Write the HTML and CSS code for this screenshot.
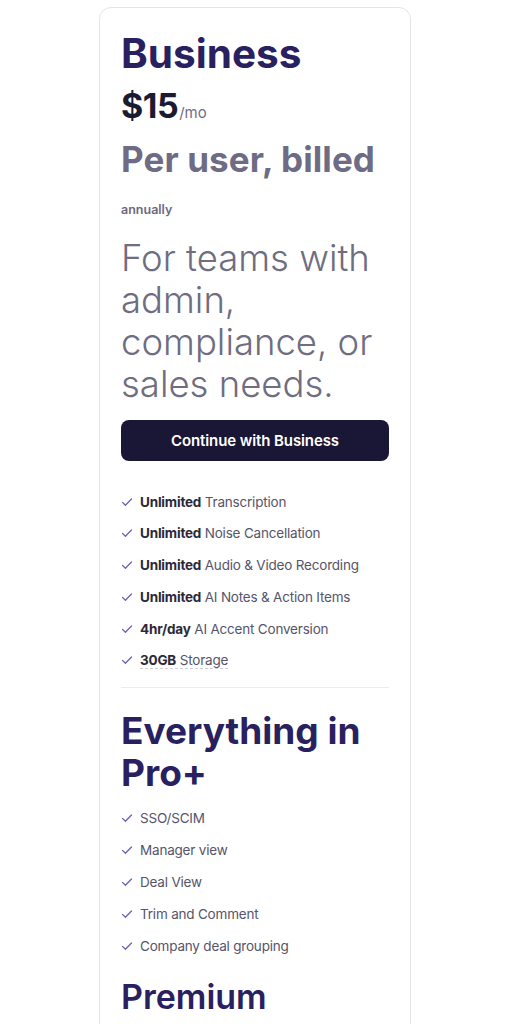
FILE: index.html
```html
<!DOCTYPE html>
<html lang="en">
<head>
<meta charset="utf-8">
<title>Business plan</title>
<link rel="stylesheet" href="styles.css">
</head>
<body>
<div class="page">
  <section class="card">
    <h2 class="plan">Business</h2>
    <div class="price"><span class="amount">$15</span><span class="per">/mo</span></div>
    <div class="billing">Per user, billed</div>
    <div class="billing-sub">annually</div>
    <p class="desc">For teams with admin, compliance, or sales needs.</p>
    <button class="cta">Continue with Business</button>
    <ul class="features">
      <li><svg class="check" viewBox="0 0 12 12"><path d="M1.5 6.4 L4.4 9.2 L10.5 3"/></svg><span><b>Unlimited</b> Transcription</span></li>
      <li><svg class="check" viewBox="0 0 12 12"><path d="M1.5 6.4 L4.4 9.2 L10.5 3"/></svg><span><b>Unlimited</b> Noise Cancellation</span></li>
      <li><svg class="check" viewBox="0 0 12 12"><path d="M1.5 6.4 L4.4 9.2 L10.5 3"/></svg><span><b>Unlimited</b> Audio &amp; Video Recording</span></li>
      <li><svg class="check" viewBox="0 0 12 12"><path d="M1.5 6.4 L4.4 9.2 L10.5 3"/></svg><span><b>Unlimited</b> AI Notes &amp; Action Items</span></li>
      <li><svg class="check" viewBox="0 0 12 12"><path d="M1.5 6.4 L4.4 9.2 L10.5 3"/></svg><span><b>4hr/day</b> AI Accent Conversion</span></li>
      <li><svg class="check" viewBox="0 0 12 12"><path d="M1.5 6.4 L4.4 9.2 L10.5 3"/></svg><span class="tip"><b>30GB</b> Storage</span></li>
    </ul>
    <hr class="divider">
    <h3 class="section">Everything in Pro+</h3>
    <ul class="features features-pro">
      <li><svg class="check" viewBox="0 0 12 12"><path d="M1.5 6.4 L4.4 9.2 L10.5 3"/></svg><span>SSO/SCIM</span></li>
      <li><svg class="check" viewBox="0 0 12 12"><path d="M1.5 6.4 L4.4 9.2 L10.5 3"/></svg><span>Manager view</span></li>
      <li><svg class="check" viewBox="0 0 12 12"><path d="M1.5 6.4 L4.4 9.2 L10.5 3"/></svg><span>Deal View</span></li>
      <li><svg class="check" viewBox="0 0 12 12"><path d="M1.5 6.4 L4.4 9.2 L10.5 3"/></svg><span>Trim and Comment</span></li>
      <li><svg class="check" viewBox="0 0 12 12"><path d="M1.5 6.4 L4.4 9.2 L10.5 3"/></svg><span>Company deal grouping</span></li>
    </ul>
    <h3 class="section premium">Premium</h3>
  </section>
</div>
</body>
</html>
```
FILE: styles.css
```css
* { box-sizing: border-box; }
html, body { margin: 0; padding: 0; background: #ffffff; }
body { font-family: "Inter", "Liberation Sans", sans-serif; }
.page { padding: 7px 0 0 99px; height: 1024px; overflow: hidden; }
.card {
  width: 312px;
  border: 1px solid #e4e4e8;
  border-radius: 12px;
  padding: 22px 21px 40px 21px;
  display: flex;
  flex-direction: column;
}
.plan {
  margin: 0;
  font-size: 40.5px;
  line-height: 48px;
  font-weight: 700;
  color: #29215f;
  letter-spacing: 0;
}
.price { margin-top: 6px; display: flex; align-items: baseline; height: 44px; }
.amount { font-size: 34px; line-height: 44px; font-weight: 700; color: #1c1a30; letter-spacing: -0.5px; }
.per { font-size: 15px; color: #6f6d83; margin-left: 1px; }
.billing { font-size: 35px; line-height: 44px; font-weight: 700; color: #6e6c84; letter-spacing: 0.1px; margin-top: 9px; }
.billing-sub { font-size: 12.5px; line-height: 16px; font-weight: 600; color: #6b6980; margin-top: 21px; }
.desc { margin: 18.5px 0 0; font-size: 36.5px; line-height: 42px; font-weight: 300; color: #6f6d80; letter-spacing: 0; }
.cta {
  margin-top: 15.5px;
  height: 41px;
  flex: none;
  border: none;
  border-radius: 8px;
  background: #1a1636;
  color: #ffffff;
  font-family: inherit;
  font-size: 15px;
  font-weight: 600;
  letter-spacing: -0.1px;
}
.features { list-style: none; margin: 30.5px 0 0; padding: 0; display: flex; flex-direction: column; gap: 11.8px; }
.features-pro { margin-top: 14px; }
.features li { display: flex; align-items: center; gap: 7px; height: 20px; font-size: 13.5px; color: #56546a; letter-spacing: -0.2px; }
.features b { font-weight: 700; color: #2b2939; }
.check { width: 12px; height: 12px; flex: none; }
.check path { fill: none; stroke: #6b60b3; stroke-width: 1.3; stroke-linecap: round; stroke-linejoin: round; }
.tip { border-bottom: 1px dashed #cfced6; line-height: 16px; }
.divider { border: none; border-top: 1px solid #ececef; margin: 17px 0 0; }
.section { margin: 22px 0 0; font-size: 37px; line-height: 42px; font-weight: 700; color: #29215f; letter-spacing: 0; }
.premium { font-size: 34px; font-weight: 600; margin-top: 20px; }
```
